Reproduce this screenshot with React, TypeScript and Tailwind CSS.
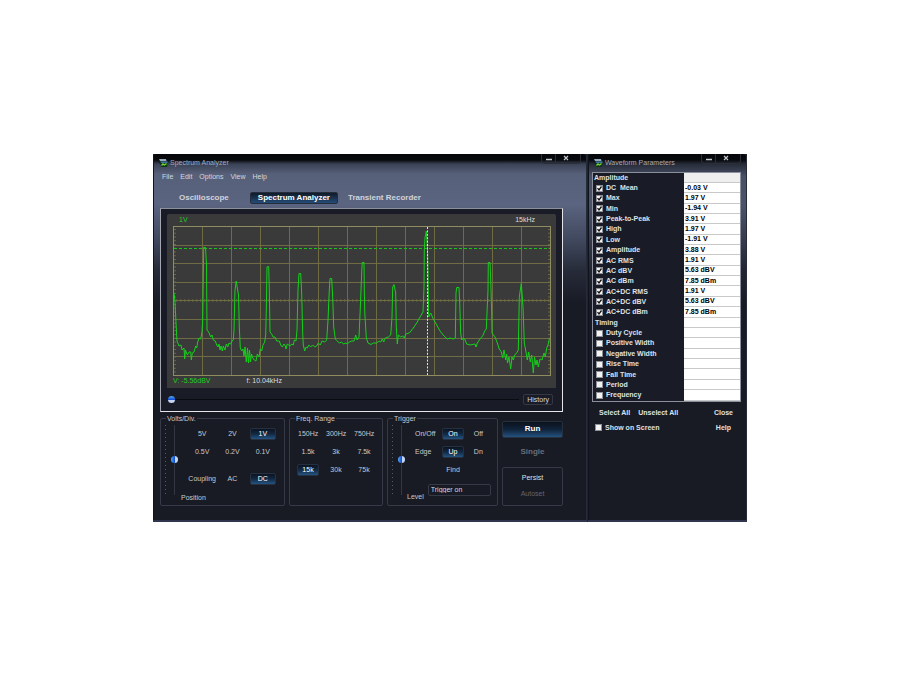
import { useState } from 'react';
import type { ReactNode } from 'react';
import clsx from 'clsx';

const AMPLITUDE = [
  { name: 'DC  Mean', value: '-0.03 V' },
  { name: 'Max', value: '1.97 V' },
  { name: 'Min', value: '-1.94 V' },
  { name: 'Peak-to-Peak', value: '3.91 V' },
  { name: 'High', value: '1.97 V' },
  { name: 'Low', value: '-1.91 V' },
  { name: 'Amplitude', value: '3.88 V' },
  { name: 'AC RMS', value: '1.91 V' },
  { name: 'AC dBV', value: '5.63 dBV' },
  { name: 'AC dBm', value: '7.85 dBm' },
  { name: 'AC+DC RMS', value: '1.91 V' },
  { name: 'AC+DC dBV', value: '5.63 dBV' },
  { name: 'AC+DC dBm', value: '7.85 dBm' },
];

const TIMING = ['Duty Cycle', 'Positive Width', 'Negative Width', 'Rise Time', 'Fall Time', 'Period', 'Frequency'];

// sampled spectrum, same units as the plot's viewBox
const TRACE = `174,293 175,302 176,323 177,341 179,346 181,345 182,350 184,348 184.7,359 185.5,350 187.3,355 189,352 190.7,352
191.3,360 192.3,353 194,352 195.7,346 196.7,348 197.7,342 199,338 200.7,339 202,332 202.7,320 203.4,270 203.7,247.5 205.5,247.5
206.5,265 207,330 208.7,332 210.7,337 212,335 213.3,340 215.3,341 216.7,345 218,347 219,344 220,350 221,346 222.3,351 223.3,346
225,350 226.3,344 227.7,347 229,343 230.7,344 232,341 233.3,340 234,330 235,290 236.3,281 237.3,288 238.5,295 239.3,327 240.3,348
241.7,351 243,349 244,356 245,347 246.3,362 247.5,348 248.5,363 249.5,350 250.5,362 251.5,354 252.8,358 254.3,360 256,361 257.3,354
259,357 260.3,349 261.7,351 263,345 264.7,342 265.7,335 266.3,310 267,267 268.7,266.5 269.3,290 270,332 271.7,334 273,337 275,337
276.7,341 279.3,341 280.7,345 282.3,347 284,344 285.3,346 286,349 287.3,344 290,346 291.7,344 293.3,345 294.3,340 296,341 297,330
298,290 299,273.5 300.7,273.5 301.7,294 302.7,333 303.3,345 304.7,351 306,347 307.3,348 308.7,345 310.7,347 312.7,345 314.7,347
316.7,346 318.3,343 320.3,345 322,341 324.7,342 326.7,340 328,320 329.3,290 330,278.5 331.7,278.5 332.7,297 333.7,327 335.3,339
337.3,341 339.3,343 341.7,342 343.3,344 346,343 347.3,344 349.3,342 352,341 354,341 355.7,335 357,340 359,337 360.5,303 361.8,270
362.3,262.5 364,262.5 364.3,290 364.8,313 366.3,338 368,343 371,344.5 373.3,343 376.7,343 379,341 380.7,342 382.3,339 383.7,342
385.3,338 388.3,337 390.7,335 392,317 392.7,287 394,284.5 395.7,293 396.3,327 397.3,344 398.3,335 400.7,337 402.7,336 404.3,338
405.7,334 409.3,333 413.3,328 416.7,323 420,317 423,312 424,287 424.3,250 425,238 426.3,231 427.5,250 428,270 428.7,317 430.7,313
433.3,319 436.7,325 440,331 444,336 447.3,339 450,338 453.3,339 455.3,338 456,293 456.7,287.5 459,287.5 459.7,303 460.7,333
461.7,340 463.3,338 464.7,339 466.7,344 470,345 475,344 476,347 477.3,343 480.7,338 482.7,336 484.7,331 486.3,329 488,290 488.3,262.5
490,262.5 490.7,280 491.7,313 492,333 495,337 497.3,343 499.3,349 501.3,352 502.7,358 504,350 505.7,360 506.7,354 507.5,363 509,357
510.7,369 512,357 513.3,360 514.7,355 516.7,353 518.3,350 519.3,297 521.3,283.5 523,307 524.3,343 526,352 527.3,360 528.7,352
530.3,362 531.7,355 533.3,373 534.5,357 536,365 537,360 538.3,367 540,359 542,360 544,353 545.3,357 546.7,348 548,345 549.5,338`;

function Plot() {
  const cols = Array.from({ length: 12 }, (_, i) => 202.5 + i * 29);
  const rows = Array.from({ length: 7 }, (_, i) => 245.5 + Math.floor(i * 18.6));
  const minor = Array.from({ length: 39 }, (_, i) => 229.5 + i * 3.75);
  const ticks = Array.from({ length: 94 }, (_, i) => 176.8 + i * 4);
  return (
    <svg viewBox="173 226 378 150" className="block h-auto w-full" role="img" aria-label="Spectrum plot">
      <g stroke="#6f6c44" fill="none">
        {cols.map(x => <path key={x} d={`M${x} 227V375`} />)}
        {rows.map(y => <path key={y} d={`M174 ${y}H550`} />)}
        {ticks.map(x => <path key={x} d={`M${x} 299v3`} strokeWidth="0.8" />)}
        {minor.map(y => <path key={y} d={`M174 ${y}h2M548 ${y}h2`} strokeWidth="0.9" />)}
      </g>
      <rect x="173.5" y="226.5" width="377" height="149" fill="none" stroke="#908c61" />
      <path d="M174 248.5H550" stroke="#19c51d" strokeDasharray="3 2" />
      <polyline points={TRACE} fill="none" stroke="#14d01a" strokeLinejoin="bevel" />
      <path d="M427.5 227V375" stroke="#e4e4e4" strokeDasharray="2 1.4" />
    </svg>
  );
}

function AppIcon() {
  return (
    <svg viewBox="0 0 9 8" className="h-2 w-[9px] shrink-0" aria-hidden="true">
      <path d="M0 0.500h7v5H1z" fill="#07101c" />
      <path d="M0 0.300h7l.5 1.500H1z" fill="#c4dcec" />
      <path d="M1 2.500h7.500L8 8H2z" fill="#12351a" />
      <path d="M1.500 2.500h7v1.200H2z" fill="#4c86c4" />
      <path d="M2.500 6.500l1.500-1.500 1.500 1 2-1.500" stroke="#6fd633" strokeWidth="1.400" fill="none" />
    </svg>
  );
}

function TitleBar({ title }: { title: string }) {
  return (
    <header className="flex h-[18px] items-start justify-between">
      <h2 className="flex h-full items-center gap-0.5 pl-1.5 text-[7px] text-[#a4abb9]">
        <AppIcon />
        {title}
      </h2>
      <div className="mr-1.5 flex h-2.5 rounded-b-sm border border-t-0 border-[#2b2e36] text-[#c3c6cd]">
        <button aria-label="Minimize" className="grid w-3.5 place-items-center border-r border-[#2b2e36]">
          <svg viewBox="0 0 6 6" className="size-1.5"><path d="M0 4.500h6" stroke="currentColor" strokeWidth="1.500" /></svg>
        </button>
        <button aria-label="Close window" className="grid w-6 place-items-center pr-1">
          <svg viewBox="0 0 6 6" className="size-1.5"><path d="M1 1l4 4M5 1L1 5" stroke="currentColor" strokeWidth="1.200" /></svg>
        </button>
      </div>
    </header>
  );
}

type OptionProps = { label: string; active?: boolean; onClick?: () => void; className?: string };

function Option({ label, active, onClick, className }: OptionProps) {
  return (
    <button
      onClick={onClick}
      aria-pressed={active}
      className={clsx(
        'h-3 justify-self-center rounded-[2px] border text-center leading-[10px]',
        active
          ? 'border-[#26303f] bg-linear-to-b from-[#0c1421] via-[#122943] to-[#245482] text-white'
          : 'border-transparent text-[#c6c9d0]',
        className,
      )}
    >
      {label}
    </button>
  );
}

function Group({ title, children }: { title: string; children: ReactNode }) {
  return (
    <fieldset className="flex min-w-0 rounded-[2px] border border-[#363946]">
      <legend className="ml-[5px] h-2 px-px leading-2 text-[#c6c9d0]">{title}</legend>
      {children}
    </fieldset>
  );
}

function VerticalSlider({ label }: { label: string }) {
  return (
    <div className="flex h-[72px] shrink-0 gap-[5px] pt-0.5 pl-1">
      <div className="w-px bg-[repeating-linear-gradient(to_bottom,#555966_0_1px,transparent_1px_4px)]" />
      <input
        type="range"
        aria-label={label}
        defaultValue={50}
        className="m-0 h-full w-[7px] appearance-none bg-[linear-gradient(to_right,transparent_3px,#34373f_3px_4px,transparent_4px)] [writing-mode:vertical-lr] [&::-webkit-slider-thumb]:size-[7px] [&::-webkit-slider-thumb]:appearance-none [&::-webkit-slider-thumb]:rounded-full [&::-webkit-slider-thumb]:bg-[linear-gradient(to_right,#58a8ef,#1455d8_50%,#c6d4f4_55%)]"
      />
    </div>
  );
}

function Check({ label, checked, onChange }: { label: string; checked: boolean; onChange: () => void }) {
  return (
    <label className="flex items-center gap-[3px] whitespace-pre text-[#dfe1e6]">
      <span className="relative grid size-[7px] shrink-0">
        <input
          type="checkbox"
          checked={checked}
          onChange={onChange}
          className="peer size-[7px] appearance-none border border-[#8d9096] bg-[#f3f3f3]"
        />
        <svg viewBox="0 0 7 7" className="pointer-events-none absolute inset-0 hidden size-[7px] peer-checked:block">
          <path d="M1.500 3.200l1.500 1.800 2.500-3.500" stroke="#111" strokeWidth="1.300" fill="none" />
        </svg>
      </span>
      {label}
    </label>
  );
}

function Analyzer() {
  const [tab, setTab] = useState('Spectrum Analyzer');
  const [volts, setVolts] = useState('1V');
  const [coupling, setCoupling] = useState('DC');
  const [range, setRange] = useState('15k');
  const [trigger, setTrigger] = useState('On');
  const [edge, setEdge] = useState('Up');

  return (
    <main className="min-w-0 flex-1 rounded-t-[3px] border-b-2 border-[#30344c] bg-[linear-gradient(to_bottom,#050609_0,#08090d_6px,#3a4256_10px,#576079_20px,#5b6480_50px,#424a60_84px,#272c3a_116px,#181b24_150px)] shadow-[inset_1px_0_0_#10131b,inset_-1px_0_0_#262b3a]">
      <TitleBar title="Spectrum Analyzer" />
      <nav className="flex h-2.5 items-center gap-[7px] pl-[9px] text-[#d3d7df]">
        {['File', 'Edit', 'Options', 'View', 'Help'].map(m => <button key={m}>{m}</button>)}
      </nav>

      <div className="pr-6 pb-3.5 pl-[7px]">
        <div className="flex gap-0.5 pt-2.5 pb-1 pl-[11px] text-[8px] font-bold">
          {['Oscilloscope', 'Spectrum Analyzer', 'Transient Recorder'].map(t => (
            <button
              key={t}
              onClick={() => setTab(t)}
              className={clsx(
                'h-3 rounded-[2px] border px-[7px] leading-[10px] first:mr-[11px]',
                t === tab
                  ? 'border-[#252d3d] bg-linear-to-b from-[#101a29] to-[#234d78] text-white'
                  : 'border-transparent text-[#d0d4dc]',
              )}
            >
              {t}
            </button>
          ))}
        </div>

        <section className="border border-t-[#8c909c] border-r-[#e6e6ea] border-b-[#e6e6ea] border-l-[#a5a8b0] bg-[#191c26] px-1.5 pt-[5px]">
          <div className="rounded-t-[2px] bg-[#3a3a3a] pr-[5px] pl-1.5">
            <div className="flex h-3 items-center justify-between pr-4 pl-1.5">
              <span className="text-[#1fce22]">1V</span>
              <span className="text-[#dedede]">15kHz</span>
            </div>
            <Plot />
            <div className="flex h-3 gap-9 leading-[9px]">
              <span className="text-[#1fce22]">V: -5.56dBV</span>
              <span className="text-[#dedede]">f: 10.04kHz</span>
            </div>
          </div>
          <div className="flex h-[23px] items-center gap-1 pr-[3px] pl-px">
            <input
              type="range"
              aria-label="History position"
              defaultValue={0}
              className="m-0 h-[7px] min-w-0 flex-1 appearance-none bg-[linear-gradient(to_bottom,transparent_3px,#090b10_3px_4px,transparent_4px)] [&::-webkit-slider-thumb]:size-[7px] [&::-webkit-slider-thumb]:appearance-none [&::-webkit-slider-thumb]:rounded-full [&::-webkit-slider-thumb]:bg-[linear-gradient(to_bottom,#58a8ef,#1455d8_50%,#c6d4f4_60%)]"
            />
            <button className="h-[11px] rounded-[2px] border border-[#343844] px-[3px] leading-[9px] text-[#d5d8de]">History</button>
          </div>
        </section>

        <div className="mt-[3px] grid grid-cols-[125fr_94fr_111fr_61fr] gap-1">
          <Group title="Volts/Div.">
            <VerticalSlider label="Position" />
            <div className="min-w-0 flex-1 pt-[5px] pr-1.5 pl-[3px]">
              <div className="ml-1.5 grid grid-cols-3 gap-y-1.5">
                {['5V', '2V', '1V', '0.5V', '0.2V', '0.1V'].map(v => (
                  <Option key={v} label={v} active={volts === v} onClick={() => setVolts(v)} className="w-[26px]" />
                ))}
              </div>
              <div className="mt-[15px] ml-1.5 grid grid-cols-3 items-center">
                <span className="justify-self-center text-[#c6c9d0]">Coupling</span>
                {['AC', 'DC'].map(c => (
                  <Option key={c} label={c} active={coupling === c} onClick={() => setCoupling(c)} className="w-[26px]" />
                ))}
              </div>
              <div className="mt-2 pb-0.5 leading-[10px] text-[#c6c9d0]">Position</div>
            </div>
          </Group>

          <Group title="Freq. Range">
            <div className="grid flex-1 grid-cols-3 content-start gap-y-1.5 px-1 pt-[5px]">
              {['150Hz', '300Hz', '750Hz', '1.5k', '3k', '7.5k', '15k', '30k', '75k'].map(r => (
                <Option key={r} label={r} active={range === r} onClick={() => setRange(r)} className="w-[22px]" />
              ))}
            </div>
          </Group>

          <Group title="Trigger">
            <VerticalSlider label="Level" />
            <div className="min-w-0 flex-1 pt-[5px] pr-1.5 pl-0.5">
              <div className="ml-2 grid grid-cols-3 items-center gap-y-1.5 text-[#c6c9d0]">
                <span>On/Off</span>
                {['On', 'Off'].map(t => (
                  <Option key={t} label={t} active={trigger === t} onClick={() => setTrigger(t)} className="w-[22px]" />
                ))}
                <span>Edge</span>
                {['Up', 'Dn'].map(e => (
                  <Option key={e} label={e} active={edge === e} onClick={() => setEdge(e)} className="w-[22px]" />
                ))}
                <Option label="Find" className="col-start-2 w-[22px]" />
              </div>
              <div className="mt-2 flex h-[18px] gap-1">
                <label htmlFor="level" className="self-end leading-[10px] text-[#c6c9d0]">Level</label>
                <input
                  id="level"
                  defaultValue="Trigger on"
                  className="h-3 w-full min-w-0 flex-1 rounded-[2px] border border-[#363946] px-0.5 text-[#d5d8de]"
                />
              </div>
            </div>
          </Group>

          <div className="flex flex-col pt-1.5">
            <button className="h-[17px] shrink-0 rounded-[2px] border border-[#26303f] bg-linear-to-b from-[#0b111c] via-[#10243c] to-[#24527f] text-[8px] font-bold text-white">
              Run
            </button>
            <button disabled className="mt-2 h-3 text-[8px] font-bold text-[#6a6e78]">Single</button>
            <div className="mt-auto flex h-[39px] flex-col items-center justify-around rounded-[2px] border border-[#363946] py-0.5">
              <button className="text-[#dfe1e6]">Persist</button>
              <button disabled className="text-[#626670]">Autoset</button>
            </div>
          </div>
        </div>
      </div>
    </main>
  );
}

function Parameters() {
  const [selected, setSelected] = useState<string[]>(AMPLITUDE.map(p => p.name));
  const [onScreen, setOnScreen] = useState(false);

  const toggle = (name: string) =>
    setSelected(s => (s.includes(name) ? s.filter(n => n !== name) : [...s, name]));

  const renderRow = (name: string, value: string) => (
    <tr key={name}>
      <td className="p-0 pl-[3px] align-middle"><Check label={name} checked={selected.includes(name)} onChange={() => toggle(name)} /></td>
      <td className="border-b border-[#c9c9c9] bg-white p-0 pl-px align-middle text-black">{value || '\u00a0'}</td>
    </tr>
  );

  return (
    <aside className="w-[159px] shrink-0 rounded-t-[3px] border-b-2 border-[#30344c] bg-[linear-gradient(to_bottom,#050609_0,#08090d_6px,#262b38_10px,#485066_22px,#4c546c_50px,#363d50_84px,#222633_116px,#181b24_150px)] font-bold shadow-[inset_1px_0_0_#10131b,inset_-1px_0_0_#262b3a]">
      <div className="font-normal"><TitleBar title="Waveform Parameters" /></div>
      <div className="pr-1.5 pl-1">
        <table className="h-[230px] w-full table-fixed border-separate border-spacing-0 border border-[#8c909c] bg-[#191c26] text-left leading-2">
          <colgroup>
            <col />
            <col className="w-14" />
          </colgroup>
          <tbody>
            <tr>
              <th className="p-0 pl-px align-middle text-[#dfe1e6]">Amplitude</th>
              <td className="border-b border-[#c9c9c9] bg-[#eeeeee] p-0">{'\u00a0'}</td>
            </tr>
            {AMPLITUDE.map(p => renderRow(p.name, p.value))}
            <tr>
              <th className="p-0 pl-0.5 align-middle text-[#dfe1e6]">Timing</th>
              <td className="border-b border-[#c9c9c9] bg-white p-0">{'\u00a0'}</td>
            </tr>
            {TIMING.map(t => renderRow(t, ''))}
          </tbody>
        </table>
      </div>
      <div className="flex h-[18px] items-center pt-1 pr-3.5 pl-[11px] text-[#dfe1e6]">
        <button onClick={() => setSelected([...AMPLITUDE.map(p => p.name), ...TIMING])}>Select All</button>
        <button onClick={() => setSelected([])} className="ml-2">Unselect All</button>
        <button className="ml-auto">Close</button>
      </div>
      <div className="flex h-4 items-center justify-between pr-4 pl-[7px] text-[#dfe1e6]">
        <Check label="Show on Screen" checked={onScreen} onChange={() => setOnScreen(v => !v)} />
        <button>Help</button>
      </div>
    </aside>
  );
}

export default function App() {
  return (
    <div className="flex min-h-screen items-center justify-center bg-white font-['Liberation_Sans',Arial,sans-serif] text-[7px] leading-[10px]">
      <div className="flex w-full max-w-[594px] gap-px bg-[#20242f]">
        <Analyzer />
        <Parameters />
      </div>
    </div>
  );
}
